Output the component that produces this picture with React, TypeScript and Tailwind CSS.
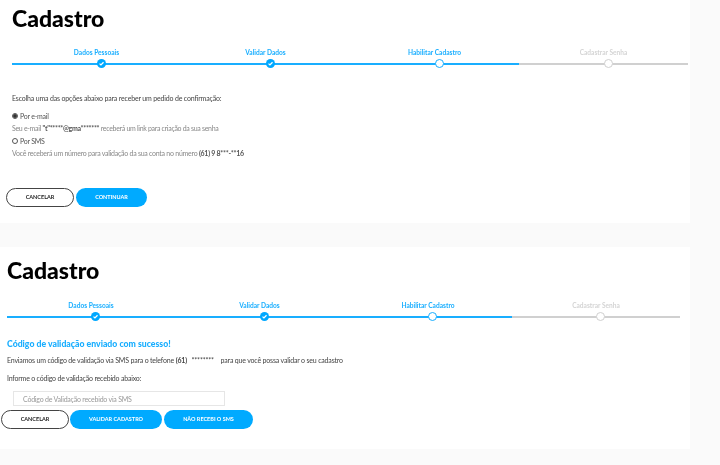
import type { FC, ReactNode } from "react";

const fonte = "font-['Lato','Open_Sans',sans-serif]";

const etapas = [
  { label: "Dados Pessoais", status: "ok" },
  { label: "Validar Dados", status: "ok" },
  { label: "Habilitar Cadastro", status: "atual" },
  { label: "Cadastrar Senha", status: "pendente" },
];

const Stepper: FC<{ colunas: string }> = ({ colunas }) => (
  <div className={`grid ${colunas}`}>
    {etapas.map(({ label, status }) => (
      <div key={label} className="flex flex-col items-center">
        <span
          className={`h-[10px] text-[6.6px] leading-[10px] font-bold ${
            status === "pendente" ? "text-[#d4d4d4]" : "text-[#19aeff]"
          }`}
        >
          {label}
        </span>
        <div
          className={`mt-[2px] flex h-[9px] w-full items-center justify-center pl-[9px] bg-[length:100%_2px] bg-center bg-no-repeat ${
            status === "pendente"
              ? "bg-[linear-gradient(#d0d0d0,#d0d0d0)]"
              : "bg-[linear-gradient(#19aeff,#19aeff)]"
          }`}
        >
          {status === "ok" && (
            <span className="flex h-[9px] w-[9px] items-center justify-center rounded-full bg-[#00a8ff]">
              <svg viewBox="0 0 10 10" className="h-[7px] w-[7px]" fill="none" stroke="white" strokeWidth="1.8">
                <path d="M2.2 5.2 4.2 7.1 7.9 3.2" />
              </svg>
            </span>
          )}
          {status === "atual" && (
            <span className="h-[9px] w-[9px] rounded-full border border-[#19aeff] bg-white" />
          )}
          {status === "pendente" && (
            <span className="h-[9px] w-[9px] rounded-full border border-[#d0d0d0] bg-white" />
          )}
        </div>
      </div>
    ))}
  </div>
);

const Botao: FC<{ children: ReactNode; largura: string; outline?: boolean }> = ({
  children,
  largura,
  outline,
}) => (
  <button
    className={`h-[19px] rounded-full text-[5.5px] font-bold ${largura} ${
      outline
        ? "border-[1.5px] border-[#444] bg-white text-[#222]"
        : "bg-[#00aaff] text-white"
    }`}
  >
    {children}
  </button>
);

const Radio: FC<{ marcado?: boolean }> = ({ marcado }) => (
  <span className="flex h-[6px] w-[6px] items-center justify-center rounded-full border-[0.7px] border-[#555] bg-white">
    {marcado && <span className="h-[3.5px] w-[3.5px] rounded-full bg-[#333]" />}
  </span>
);

export default function App() {
  return (
    <div className={`h-[465px] w-[720px] overflow-hidden bg-[#fafafa] blur-[0.3px] ${fonte}`}>
      <section className="h-[223px] w-[690px] bg-white">
        <div className="pl-[12px] pr-[2px]">
          <h1 className="pt-[5px] text-[23px] leading-[27px] font-black text-black">Cadastro</h1>
          <div className="mt-[15px]">
            <Stepper colunas="grid-cols-4" />
          </div>
          <p className="mt-[25px] text-[7px] tracking-[-0.17px] leading-[10px] text-[#444]">
            Escolha uma das opções abaixo para receber um pedido de confirmação:
          </p>
          <label className="mt-[8px] flex items-center gap-[2px] text-[7px] tracking-[-0.25px] leading-[10px] text-[#555]">
            <Radio marcado /> Por e-mail
          </label>
          <p className="mt-[2px] text-[7px] tracking-[-0.31px] leading-[10px] text-[#888]">
            Seu e-mail <b className="text-[#555]">"t"*****@gma*******</b> receberá um link para criação da sua senha
          </p>
          <label className="mt-[3px] flex items-center gap-[2px] text-[7px] tracking-[-0.25px] leading-[10px] text-[#555]">
            <Radio /> Por SMS
          </label>
          <p className="mt-[2px] text-[7px] tracking-[-0.26px] leading-[10px] text-[#888]">
            Você receberá um número para validação da sua conta no número{" "}
            <b className="text-[#555]">(61) 9 8***-**16</b>
          </p>
        </div>
        <div className="mt-[30px] flex gap-[2px] pl-[6px]">
          <Botao largura="w-[68px]" outline>CANCELAR</Botao>
          <Botao largura="w-[71px]">CONTINUAR</Botao>
        </div>
      </section>

      <section className="mt-[24px] h-[202px] w-[690px] bg-white">
        <div className="pl-[7px] pr-[10px]">
          <h1 className="pt-[10px] text-[23px] leading-[27px] font-black text-black">Cadastro</h1>
          <div className="mt-[16px]">
            <Stepper colunas="grid-cols-[168px_169px_168px_168px]" />
          </div>
          <p className="mt-[17px] text-[8.7px] leading-[12px] font-black text-[#19aeff]">
            Código de validação enviado com sucesso!
          </p>
          <p className="mt-[5px] text-[7px] tracking-[-0.18px] leading-[10px] text-[#444]">
            Enviamos um código de validação via SMS para o telefone <b>(61)</b>{" "}
            <span className="ml-[3px]">********</span>{" "}
            <span className="ml-[5px]">para que você possa validar o seu cadastro</span>
          </p>
          <p className="mt-[8px] text-[7px] tracking-[-0.2px] leading-[10px] text-[#444]">
            Informe o código de validação recebido abaixo:
          </p>
          <input
            placeholder="Código de Validação recebido via SMS"
            className="mt-[8px] ml-[6px] block h-[15px] w-[212px] border border-[#e6e6e6] px-[9px] text-[7px] tracking-[-0.22px] placeholder:text-[#999]"
          />
        </div>
        <div className="mt-[4px] flex gap-[1px] pl-[1px]">
          <Botao largura="w-[68px]" outline>CANCELAR</Botao>
          <Botao largura="w-[92px]">VALIDAR CADASTRO</Botao>
          <Botao largura="ml-[1px] w-[89px]">NÃO RECEBI O SMS</Botao>
        </div>
      </section>
    </div>
  );
}
